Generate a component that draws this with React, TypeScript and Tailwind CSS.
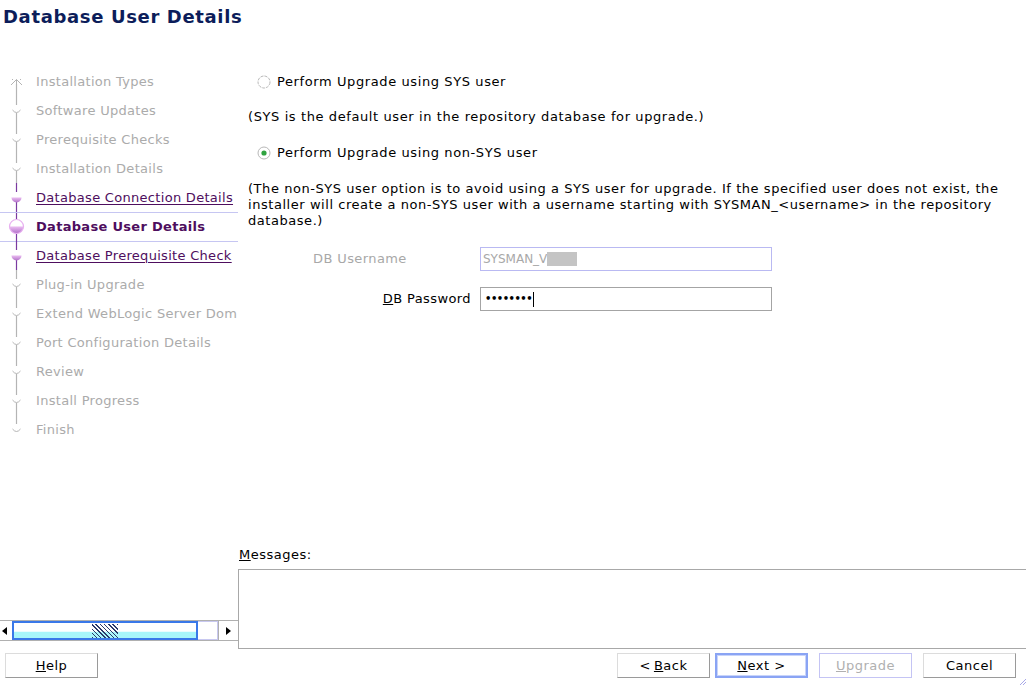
import React from 'react';

type Step = { label: string; state: 'todo' | 'done' | 'current' | 'first' };

const steps: Step[] = [
  { label: 'Installation Types', state: 'first' },
  { label: 'Software Updates', state: 'todo' },
  { label: 'Prerequisite Checks', state: 'todo' },
  { label: 'Installation Details', state: 'todo' },
  { label: 'Database Connection Details', state: 'done' },
  { label: 'Database User Details', state: 'current' },
  { label: 'Database Prerequisite Check', state: 'done' },
  { label: 'Plug-in Upgrade', state: 'todo' },
  { label: 'Extend WebLogic Server Dom', state: 'todo' },
  { label: 'Port Configuration Details', state: 'todo' },
  { label: 'Review', state: 'todo' },
  { label: 'Install Progress', state: 'todo' },
  { label: 'Finish', state: 'todo' },
];

const GRAY = '#b4b4b4';
const PURPLE = '#7a3aa0';

const StepIcon = ({ idx }: { idx: number }) => {
  const s = steps[idx];
  const prev = steps[idx - 1];
  const last = idx === steps.length - 1;
  const active = s.state === 'done' || s.state === 'current';
  // connector colour above and below this icon
  const lineColor = active ? PURPLE : GRAY;
  return (
    <svg width="36" height="29" viewBox="0 0 36 29" className="shrink-0">
      <defs>
        <linearGradient id={`g${idx}`} x1="0" y1="0" x2="0" y2="1">
          <stop offset="0.45" stopColor="#ffffff" />
          <stop offset="0.55" stopColor="#e6b6ee" />
          <stop offset="1" stopColor="#b070c8" />
        </linearGradient>
      </defs>
      {prev && <line x1="16.5" y1="0" x2="16.5" y2={s.state === 'current' ? 7 : 9} stroke={lineColor} strokeWidth="1.2" />}
      {!last && <line x1="16.5" y1="17" x2="16.5" y2="29" stroke={lineColor} strokeWidth="1.2" />}
      {s.state === 'first' && (
        <g stroke={GRAY} strokeWidth="1" fill="none">
          <path d="M11 18 L16.5 12.5 L22 18" />
          <line x1="16.5" y1="12.5" x2="16.5" y2="29" />
          <path d="M12 12 L13 13 M21 12 L20 13" />
        </g>
      )}
      {s.state === 'todo' && (
        <path d="M12.5 14 Q16.5 19 20.5 14" stroke={GRAY} strokeWidth="1" fill="none" />
      )}
      {s.state === 'done' && <circle cx="16.5" cy="14.5" r="5" fill={`url(#g${idx})`} />}
      {s.state === 'current' && (
        <circle cx="16.5" cy="14.5" r="7" fill={`url(#g${idx})`} stroke="#e8b0f0" strokeWidth="1.2" />
      )}
    </svg>
  );
};

const Radio = ({ checked }: { checked?: boolean }) => (
  <svg width="14" height="14" viewBox="0 0 14 14" className="shrink-0">
    <circle cx="7" cy="7" r="6" fill="#fff" stroke="#b8b8b8" strokeWidth="1" strokeDasharray={checked ? '0' : '3 1'} />
    {checked && <circle cx="7" cy="7" r="2.6" fill="#2fa33f" />}
  </svg>
);

const Btn = ({ children, variant }: { children: React.ReactNode; variant?: 'focus' | 'disabled' }) => {
  const cls =
    variant === 'focus'
      ? 'border-2 border-[#8aa4f4] shadow-[inset_0_0_0_1px_#c8d4fa] text-black'
      : variant === 'disabled'
      ? 'border border-[#c4c4f4] text-[#b0b0b0]'
      : 'border border-t-[#dcdcdc] border-l-[#dcdcdc] border-b-[#9a9a9a] border-r-[#9a9a9a] text-black';
  return (
    <div className={`w-[93px] h-[25px] bg-white flex items-center justify-center text-[13px] tracking-[0.5px] ${cls}`}>
      {children}
    </div>
  );
};

export default function App() {
  return (
    <div
      className="w-[1026px] h-[685px] bg-white relative overflow-hidden flex flex-col text-black"
      style={{ fontFamily: '"DejaVu Sans", Verdana, sans-serif' }}
    >
      {/* Header */}
      <div className="h-[36px] pl-[3px] pt-[5px] text-[18px] font-bold tracking-[0.65px] text-[#0c1d5a] leading-[24px]">
        Database User Details
      </div>

      <div className="flex flex-1">
        {/* Left navigation */}
        <div className="w-[238px] flex flex-col">
          <div className="pt-[31px] flex-1">
            {steps.map((s, i) => (
              <div
                key={s.label}
                className={`flex items-center h-[29px] text-[13px] tracking-[0.3px] whitespace-nowrap overflow-hidden ${
                  s.state === 'current' ? 'border-y border-[#c6c6f2] h-[30px] -my-[0.5px]' : ''
                }`}
              >
                <StepIcon idx={i} />
                <span
                  className={
                    s.state === 'done'
                      ? 'text-[#4e0e5e] underline underline-offset-2'
                      : s.state === 'current'
                      ? 'text-[#4e0e5e] font-bold'
                      : 'text-[#ababab]'
                  }
                >
                  {s.label}
                </span>
              </div>
            ))}
          </div>
          {/* horizontal scrollbar */}
          <div className="h-[21px] mb-[8px] flex items-stretch border-y border-[#b0b0b0]">
            <div className="w-[12px] flex items-center justify-start pl-[2px]">
              <div className="w-0 h-0 border-y-[4px] border-y-transparent border-r-[5px] border-r-black" />
            </div>
            <div className="w-[186px] border-2 border-[#3a78e8] bg-[linear-gradient(#ffffff_0%,#ffffff_55%,#a8f6fa_62%,#a8f6fa_100%)] flex items-center justify-center">
              <div className="w-[26px] h-[14px] bg-[repeating-linear-gradient(45deg,#2c3a6a_0px,#2c3a6a_1px,transparent_1px,transparent_3px)]" />
            </div>
            <div className="w-[20px] border-y border-r border-[#c8c8f0]" />
            <div className="flex-1 border-l border-[#b0b0b0] flex items-center justify-center">
              <div className="w-0 h-0 border-y-[4px] border-y-transparent border-l-[5px] border-l-black" />
            </div>
          </div>
        </div>

        {/* Right content */}
        <div className="flex-1 flex flex-col">
          <div className="pt-[39px] pl-[19px] text-[13px] tracking-[0.6px] leading-[14px]">
            <div className="flex items-center gap-[6px] h-[14px]">
              <Radio />
              <span>Perform Upgrade using SYS user</span>
            </div>
            <div className="mt-[21px] -ml-[9px]">(SYS is the default user in the repository database for upgrade.)</div>
            <div className="mt-[22px] flex items-center gap-[6px] h-[14px]">
              <Radio checked />
              <span>Perform Upgrade using non-SYS user</span>
            </div>
            <div className="mt-[21px] -ml-[9px] text-[13px] tracking-[0.55px] leading-[16px] whitespace-nowrap">
              (The non-SYS user option is to avoid using a SYS user for upgrade. If the specified user does not exist, the
              <br />
              installer will create a non-SYS user with a username starting with SYSMAN_&lt;username&gt; in the repository
              <br />
              database.)
            </div>

            <div className="mt-[18px] flex items-center h-[24px] tracking-[0.4px]">
              <span className="w-[223px] pl-[56px] text-[#a8a8a8]">DB Username</span>
              <div className="w-[292px] h-[24px] border border-[#b9b9f2] flex items-center pl-[2px] text-[12px] tracking-normal text-[#a8a8a8]">
                SYSMAN_V
                <span className="inline-block w-[30px] h-[14px] bg-[#c4c4c4]" />
              </div>
            </div>
            <div className="mt-[16px] flex items-center h-[24px] tracking-[0.4px]">
              <span className="w-[223px] pr-[9px] text-right">
                <span className="underline">D</span>B Password
              </span>
              <div className="w-[292px] h-[24px] border border-[#a4a4a4] flex items-center pl-[4px]">
                <span className="text-[10px] tracking-[-0.5px] font-bold">••••••••</span>
                <span className="inline-block w-[1px] h-[15px] bg-black ml-[1px]" />
              </div>
            </div>
          </div>

          <div className="flex-1" />
          <div className="text-[13px] tracking-[0.5px] pl-[1px] mb-[5px]">
            <span className="underline">M</span>essages:
          </div>
          <div className="h-[80px] border border-[#a8a8a8] border-r-0" />
        </div>
      </div>

      {/* Footer buttons */}
      <div className="h-[36px] flex items-start pt-[4px]">
        <div className="pl-[5px]">
          <Btn>
            <span className="underline">H</span>elp
          </Btn>
        </div>
        <div className="flex-1" />
        <div className="flex gap-[5px]">
          <Btn>
            &lt; <span className="underline ml-[3px]">B</span>ack
          </Btn>
          <Btn variant="focus">
            <span className="underline">N</span>ext &gt;
          </Btn>
        </div>
        <div className="ml-[11px]">
          <Btn variant="disabled">
            <span className="underline">U</span>pgrade
          </Btn>
        </div>
        <div className="ml-[11px] mr-[10px]">
          <Btn>Cancel</Btn>
        </div>
      </div>

      {/* resize grip */}
      <svg width="10" height="10" viewBox="0 0 10 10" className="absolute right-0 bottom-0">
        <path d="M10 4 L4 10 M10 7 L7 10" stroke="#a8a8e8" strokeWidth="1" />
      </svg>
    </div>
  );
}
